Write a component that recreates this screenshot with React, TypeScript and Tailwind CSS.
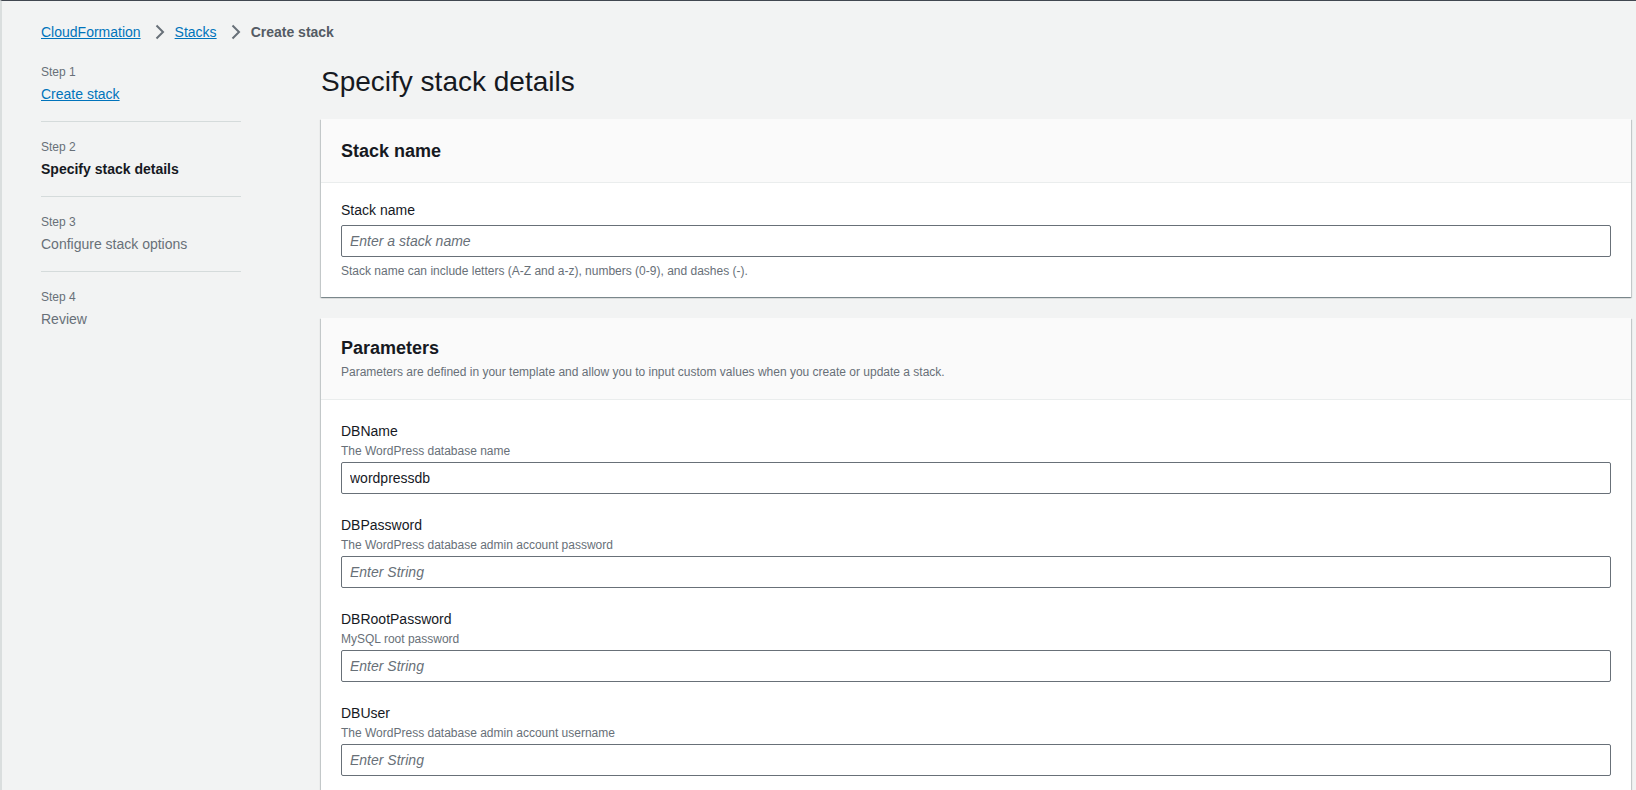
const font = { fontFamily: '"Liberation Sans", Arial, sans-serif' };

function Chevron() {
  return (
    <svg width="16" height="16" viewBox="0 0 16 16" className="ml-[11px] mr-[7px] shrink-0">
      <polyline points="4.5,1.5 11,8 4.5,14.5" fill="none" stroke="#687078" strokeWidth="2" />
    </svg>
  );
}

const steps = [
  { n: 1, title: 'Create stack', state: 'link' },
  { n: 2, title: 'Specify stack details', state: 'current' },
  { n: 3, title: 'Configure stack options', state: 'todo' },
  { n: 4, title: 'Review', state: 'todo' },
];

const params = [
  { name: 'DBName', desc: 'The WordPress database name', value: 'wordpressdb' },
  { name: 'DBPassword', desc: 'The WordPress database admin account password', value: '' },
  { name: 'DBRootPassword', desc: 'MySQL root password', value: '' },
  { name: 'DBUser', desc: 'The WordPress database admin account username', value: '' },
];

function TextInput({ value, placeholder }: { value?: string; placeholder: string }) {
  return (
    <input
      readOnly
      value={value}
      placeholder={placeholder}
      className="block w-full h-8 rounded-[2px] border border-[#687078] bg-white px-2 text-[14px] text-[#16191f] outline-none placeholder:italic placeholder:text-[#687078]"
      style={font}
    />
  );
}

const card = 'bg-white shadow-[0_1px_1px_0_rgba(0,28,36,0.3),1px_1px_1px_0_rgba(0,28,36,0.15),-1px_1px_1px_0_rgba(0,28,36,0.15)]';

export default function App() {
  return (
    <div className="min-h-screen bg-[#f2f3f3] border-t border-t-[#414750] border-l-2 border-l-[#dadede] text-[#16191f]" style={font}>
      <div className="pl-[39px] pr-[5px] pt-[21px]">
        {/* breadcrumbs */}
        <nav className="flex items-center h-5 text-[14px] leading-5">
          <a href="#" className="text-[#0073bb] underline">CloudFormation</a>
          <Chevron />
          <a href="#" className="text-[#0073bb] underline">Stacks</a>
          <Chevron />
          <span className="font-bold text-[#545b64]">Create stack</span>
        </nav>

        <div className="flex mt-[22px]">
          {/* wizard steps */}
          <ul className="w-[200px] shrink-0">
            {steps.map((s, i) => (
              <li
                key={s.n}
                className={`${i === 0 ? 'pt-0' : 'pt-[17px]'} ${i < steps.length - 1 ? 'pb-[17px] border-b border-[#d5dbdb]' : ''}`}
              >
                <div className="text-[12px] leading-4 text-[#687078]">Step {s.n}</div>
                <div className="mt-1 text-[14px] leading-5">
                  {s.state === 'link' && <a href="#" className="text-[#0073bb] underline">{s.title}</a>}
                  {s.state === 'current' && <span className="font-bold text-[#16191f]">{s.title}</span>}
                  {s.state === 'todo' && <span className="text-[#687078]">{s.title}</span>}
                </div>
              </li>
            ))}
          </ul>

          {/* main */}
          <main className="flex-1 ml-[80px]">
            <h1 className="text-[28px] leading-9 font-normal text-[#16191f]">Specify stack details</h1>

            <section className={`${card} mt-[19px]`}>
              <div className="h-16 flex items-center px-5 bg-[#fafafa] border-b border-[#eaeded]">
                <h2 className="text-[18px] leading-[22px] font-bold">Stack name</h2>
              </div>
              <div className="px-5 pt-[17px] pb-[18px]">
                <label className="block text-[14px] leading-5">Stack name</label>
                <div className="mt-[5px]">
                  <TextInput placeholder="Enter a stack name" />
                </div>
                <p className="mt-[6px] text-[12px] leading-4 text-[#687078]">
                  Stack name can include letters (A-Z and a-z), numbers (0-9), and dashes (-).
                </p>
              </div>
            </section>

            <section className={`${card} mt-[21px]`}>
              <div className="px-5 pt-[19px] pb-[19px] bg-[#fafafa] border-b border-[#eaeded]">
                <h2 className="text-[18px] leading-[22px] font-bold">Parameters</h2>
                <p className="mt-[5px] text-[12px] leading-4 text-[#687078]">
                  Parameters are defined in your template and allow you to input custom values when you create or update a stack.
                </p>
              </div>
              <div className="px-5 pt-[21px] pb-5 flex flex-col gap-[21px]">
                {params.map((p) => (
                  <div key={p.name}>
                    <label className="block text-[14px] leading-5">{p.name}</label>
                    <div className="mt-[2px] text-[12px] leading-4 text-[#687078]">{p.desc}</div>
                    <div className="mt-[3px]">
                      <TextInput value={p.value || undefined} placeholder="Enter String" />
                    </div>
                  </div>
                ))}
              </div>
            </section>
          </main>
        </div>
      </div>
    </div>
  );
}
